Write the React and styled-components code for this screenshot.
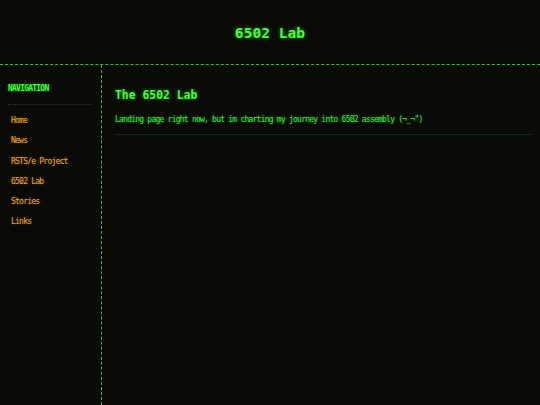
import styled, { createGlobalStyle } from 'styled-components';

const GlobalStyle = createGlobalStyle`
  html, body {
    margin: 0;
    padding: 0;
    background: #0a0a07;
  }

  body {
    font-family: "DejaVu Sans Mono", "Liberation Mono", monospace;
    color: #33ff33;
  }
`;

const Page = styled.div`
  min-height: 405px;
  display: flex;
  flex-direction: column;
  background: #0a0a07;
`;

const Header = styled.header`
  height: 64px;
  display: flex;
  align-items: center;
  justify-content: center;
  border-bottom: 1px dashed #3bbd3b;
`;

const SiteTitle = styled.h1`
  margin: 0;
  font-size: 14.6px;
  font-weight: bold;
  color: #44ff33;
  text-shadow: 0 0 4px rgba(60, 255, 50, 0.55);
`;

const Body = styled.div`
  flex: 1;
  display: flex;
  min-height: 340px;
`;

const Sidebar = styled.nav`
  width: 102px;
  box-sizing: border-box;
  padding: 19px 9px 0 8px;
  border-right: 1px dashed #3bbd3b;
`;

// small text: condensed look of the terminal font
const smallText = `
  font-size: 8px;
  letter-spacing: -0.77px;
  line-height: 10px;
`;

const NavHeading = styled.h2`
  margin: 0;
  ${smallText}
  font-weight: bold;
  color: #33ff33;
  text-shadow: 0 0 3px rgba(60, 255, 50, 0.5);
  padding-bottom: 10px;
  border-bottom: 1px dotted #2a3a26;
`;

const NavList = styled.ul`
  list-style: none;
  margin: 0;
  padding: 11px 0 0 3px;
  display: flex;
  flex-direction: column;
  gap: 10.3px;
`;

const NavLink = styled.a`
  display: block;
  ${smallText}
  color: #f0a824;
  text-decoration: none;
  text-shadow: 0 0 3px rgba(255, 170, 30, 0.4);
`;

const Main = styled.main`
  flex: 1;
  padding: 22px 8px 0 13px;
`;

const PageTitle = styled.h2`
  margin: 0;
  font-size: 11.4px;
  font-weight: bold;
  line-height: 16px;
  color: #44ff33;
  text-shadow: 0 0 4px rgba(60, 255, 50, 0.55);
`;

const Intro = styled.p`
  margin: 12px 0 0;
  ${smallText}
  color: #33ee33;
  text-shadow: 0 0 3px rgba(60, 255, 50, 0.45);
  padding-bottom: 9px;
  border-bottom: 1px dotted #1f4a1f;
`;

const links = ['Home', 'News', 'RSTS/e Project', '6502 Lab', 'Stories', 'Links'];

const App = () => (
  <Page>
    <GlobalStyle />
    <Header>
      <SiteTitle>6502 Lab</SiteTitle>
    </Header>
    <Body>
      <Sidebar>
        <NavHeading>NAVIGATION</NavHeading>
        <NavList>
          {links.map((label) => (
            <li key={label}>
              <NavLink href="#">{label}</NavLink>
            </li>
          ))}
        </NavList>
      </Sidebar>
      <Main>
        <PageTitle>The 6502 Lab</PageTitle>
        <Intro>Landing page right now, but im charting my journey into 6502 assembly (¬_¬")</Intro>
      </Main>
    </Body>
  </Page>
);

export default App;
